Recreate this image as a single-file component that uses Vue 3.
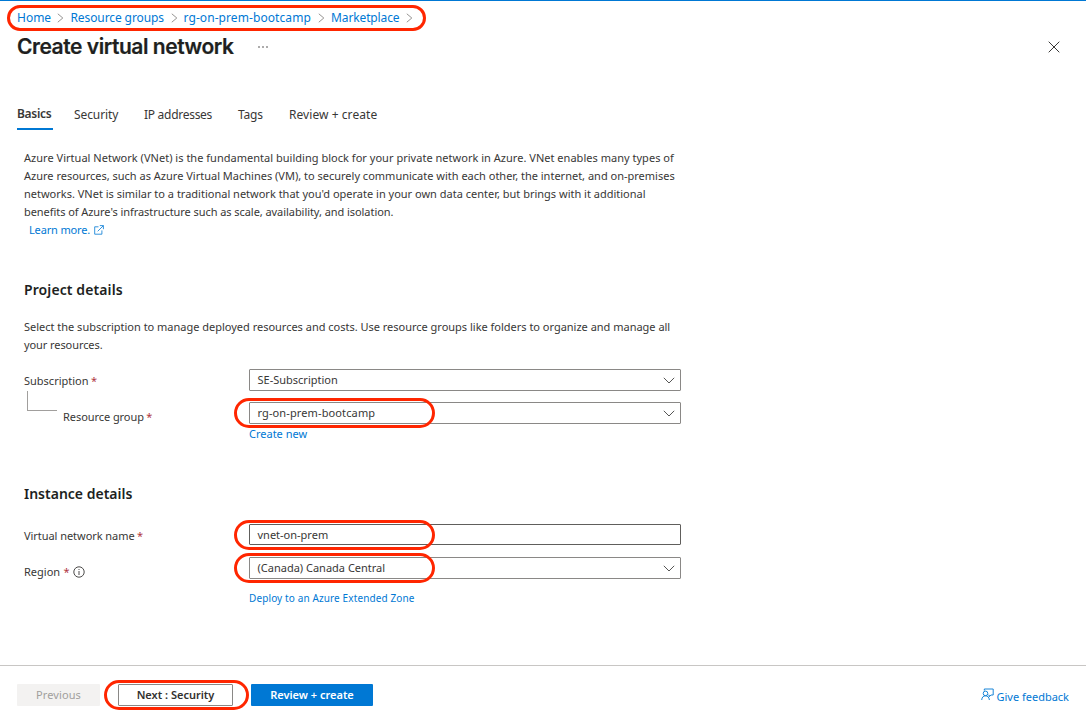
<script setup>
const crumbs = [
  { text: 'Home', cls: 'c-home' },
  { text: 'Resource groups', cls: 'c-groups' },
  { text: 'rg-on-prem-bootcamp', cls: 'c-rg' },
  { text: 'Marketplace', cls: 'c-market' },
]
const tabs = [
  { text: 'Security', cls: 't-security' },
  { text: 'IP addresses', cls: 't-ip' },
  { text: 'Tags', cls: 't-tags' },
  { text: 'Review + create', cls: 't-review' },
]
</script>

<template>
  <div class="page">
    <nav class="crumbs">
      <span v-for="c in crumbs" :key="c.text" class="crumb" :class="c.cls">
        <a>{{ c.text }}</a>
        <svg width="7" height="10" viewBox="0 0 7 10"><path d="M.8 .8 5.8 5 .8 9.2" /></svg>
      </span>
      <i class="mark mark-crumbs"></i>
    </nav>

    <header class="head">
      <h1>Create virtual network</h1>
      <svg class="dots" width="12" height="4" viewBox="0 0 12 4"><circle cx="1" cy="2" r=".75" /><circle cx="5" cy="2" r=".75" /><circle cx="9" cy="2" r=".75" /></svg>
      <svg class="close" width="12" height="12" viewBox="0 0 12 12"><path d="M.7 .7 11.3 11.3M11.3 .7 .7 11.3" /></svg>
    </header>

    <div class="tabs">
      <span class="tab active"><b>Basics</b></span>
      <span v-for="t in tabs" :key="t.text" class="tab" :class="t.cls">{{ t.text }}</span>
    </div>

    <main>
      <p class="intro">
        <span class="l1">Azure Virtual Network (VNet) is the fundamental building block for your private network in Azure. VNet enables many types of</span>
        <span class="l2">Azure resources, such as Azure Virtual Machines (VM), to securely communicate with each other, the internet, and on-premises</span>
        <span class="l3">networks. VNet is similar to a traditional network that you'd operate in your own data center, but brings with it additional</span>
        <span class="l4">benefits of Azure's infrastructure such as scale, availability, and isolation.</span>
      </p>
      <a class="learn"><span>Learn more.</span>
        <svg width="10" height="10" viewBox="0 0 10 10"><path d="M4.5 1.8H.7v7.4h7.2V5.4M5.8 .6h3.6v3.6M9.3 .7 3.7 6.3" /></svg>
      </a>

      <h2>Project details</h2>
      <p class="intro project">
        <span class="l5">Select the subscription to manage deployed resources and costs. Use resource groups like folders to organize and manage all</span>
        <span class="l6">your resources.</span>
      </p>

      <div class="row sub">
        <label><span class="n-sub">Subscription</span> <em>*</em></label>
        <div class="box"><span class="v-sub">SE-Subscription</span>
          <svg width="12" height="7" viewBox="0 0 12 7"><path d="M.8 .8 6 6 11.2 .8" /></svg>
        </div>
      </div>
      <div class="row rg">
        <i class="branch"></i>
        <label><span class="n-rg">Resource group</span> <em>*</em></label>
        <div class="box"><span class="v-rg">rg-on-prem-bootcamp</span>
          <svg width="12" height="7" viewBox="0 0 12 7"><path d="M.8 .8 6 6 11.2 .8" /></svg>
          <i class="mark mark-field"></i>
        </div>
      </div>
      <a class="under create"><span>Create new</span></a>

      <h2 class="instance">Instance details</h2>
      <div class="row vnet">
        <label><span class="n-vnet">Virtual network name</span> <em>*</em></label>
        <div class="box input"><span class="v-vnet">vnet-on-prem</span><i class="mark mark-field"></i></div>
      </div>
      <div class="row region">
        <label><span class="n-region">Region</span> <em>*</em>
          <svg class="info" width="12" height="12" viewBox="0 0 12 12"><circle cx="6" cy="6" r="5.2" /><path d="M6 5v4M6 3v1" /></svg>
        </label>
        <div class="box"><span class="v-region">(Canada) Canada Central</span>
          <svg width="12" height="7" viewBox="0 0 12 7"><path d="M.8 .8 6 6 11.2 .8" /></svg>
          <i class="mark mark-field"></i>
        </div>
      </div>
      <a class="under deploy"><span>Deploy to an Azure Extended Zone</span></a>
    </main>

    <footer>
      <button class="prev"><span>Previous</span></button>
      <button class="next"><span>Next : Security</span><i class="mark mark-next"></i></button>
      <button class="review"><span>Review + create</span></button>
      <a class="feedback">
        <svg width="13" height="13" viewBox="0 0 13 13"><path d="M3.3 2.6V1h8.9v6H10L8.2 8.7V7H7.5" /><circle cx="4.5" cy="5.4" r="2.3" /><path d="M.7 12c.2-2.7 1.6-4.2 3.8-4.2S8.1 9.3 8.4 12" /></svg>
        <span>Give feedback</span>
      </a>
    </footer>
  </div>
</template>

<style>
body { background: #fff; overflow: hidden; }
</style>

<style scoped>
* { box-sizing: border-box; }
.page { width: 1086px; height: 720px; border-top: 1px solid #0078d4; display: flex; flex-direction: column; font: 11px/18px "Noto Sans", "Open Sans", sans-serif; color: #383736; background: #fff; white-space: nowrap; }
h1, h2, p { margin: 0; }
svg { fill: none; stroke: currentColor; flex: none; }
a { color: #0078d4; }
em { font-style: normal; color: #b0373f; margin-left: -.5px; }
.mark { position: absolute; border: 3px solid #ff2600; border-radius: 15px; pointer-events: none; }

.crumbs { position: relative; height: 32px; padding: 8px 0 0 17px; display: flex; font-size: 12px; }
.crumb { display: flex; justify-content: space-between; align-items: center; height: 18px; padding-right: 6px; }
.crumb svg { stroke: #8a8886; stroke-width: .9; }
.c-home { width: 53.5px; padding-right: 7px; }
.c-groups { width: 113px; letter-spacing: -.1px; }
.c-rg { width: 147.5px; letter-spacing: .08px; }
.c-market { width: 82px; padding: 0; letter-spacing: -.12px; }
.mark-crumbs { left: 7px; top: 4px; width: 419px; height: 26px; border-radius: 13px; }

.head { height: 68px; padding: 0 26px 0 17px; display: flex; align-items: flex-start; }
h1 { font: 600 21px/28px Inter, sans-serif; color: #201f1e; width: 240.5px; letter-spacing: -.45px; -webkit-text-stroke: .2px #201f1e; }
.dots { fill: #323130; stroke: none; margin-top: 12px; }
.close { margin: 8px 0 0 auto; }

.tabs { height: 48px; padding-left: 17px; display: flex; font-size: 12px; line-height: 28px; }
.tab { height: 29px; }
.active { width: 36px; border-bottom: 2px solid #0078d4; line-height: 26px; margin-right: 21px; letter-spacing: -.3px; }
.active b { font-weight: 600; }
.t-security { width: 70px; letter-spacing: -.1px; }
.t-ip { width: 94px; letter-spacing: -.28px; }
.t-tags { width: 51px; letter-spacing: -.2px; }
.t-review { letter-spacing: .06px; }

main { padding-left: 24px; height: 516px; }
.intro span { display: block; }
.l1 { letter-spacing: .022px; }
.l4 { letter-spacing: -.06px; }
.l5 { letter-spacing: -.01px; }
.l6 { letter-spacing: -.08px; }
.learn { display: flex; align-items: center; padding-left: 5px; gap: 4px; letter-spacing: -.15px; }
.learn svg { stroke-width: .8; margin-top: -1px; }
h2 { font-size: 14px; line-height: 20px; font-weight: 600; color: #201f1e; margin-top: 41px; letter-spacing: .1px; }
.project { margin-top: 18px; }
.row { display: flex; width: 657px; height: 22px; position: relative; }
.row label { flex: none; width: 225px; padding-top: 3px; }
.box { position: relative; flex: 1; display: flex; align-items: center; justify-content: space-between; border: 1px solid #8a8886; border-radius: 1px; padding: 0 5.5px 0 7.5px; }
.box svg { stroke-width: .85; }
.v-rg { letter-spacing: .12px; }
.input { border-color: #605e5c; height: 21px; }
.mark-field { left: -16px; top: -5px; width: 201px; height: 30px; }
.sub { margin-top: 15px; }
.rg { margin-top: 11px; }
.rg label { padding: 6px 0 0 39px; }
.n-rg { letter-spacing: -.06px; }
.n-vnet { letter-spacing: -.05px; }
.branch { position: absolute; left: 3px; top: -11px; width: 30px; height: 20px; border: solid #a19f9d; border-width: 0 0 1px 1px; }
.under { display: block; margin-left: 225px; }
.create { margin-top: 1px; }
.instance { margin-top: 41px; letter-spacing: 0; }
.vnet { margin-top: 20px; }
.region { margin-top: 11px; }
.region label { padding-top: 6px; display: flex; gap: 4px; }
.info { margin-top: 3px; margin-left: -1px; stroke-width: .9; }
.deploy { margin-top: 10px; font-size: 10px; letter-spacing: .12px; }

footer { position: relative; border-top: 1px solid #c8c6c4; height: 55px; padding: 18px 17px 0 17px; display: flex; align-items: flex-start; }
button { position: relative; font: 600 11px/20px "Noto Sans", sans-serif; height: 22px; padding: 0; border: 1px solid transparent; border-radius: 1px; color: #323130; white-space: nowrap; }
.prev { width: 83px; background: #f3f2f1; color: #a19f9d; font-weight: 400; margin-right: 18px; letter-spacing: .1px; }
.next { width: 115px; background: #fff; border-color: #8a8886; margin-right: 18px; }
.review { width: 122px; background: #0078d4; color: #fff; }
.mark-next { left: -15px; top: -5px; width: 145px; height: 30px; }
.feedback { margin: 4px 0 0 auto; display: flex; gap: 2px; }
.feedback svg { stroke-width: .9; }
</style>
